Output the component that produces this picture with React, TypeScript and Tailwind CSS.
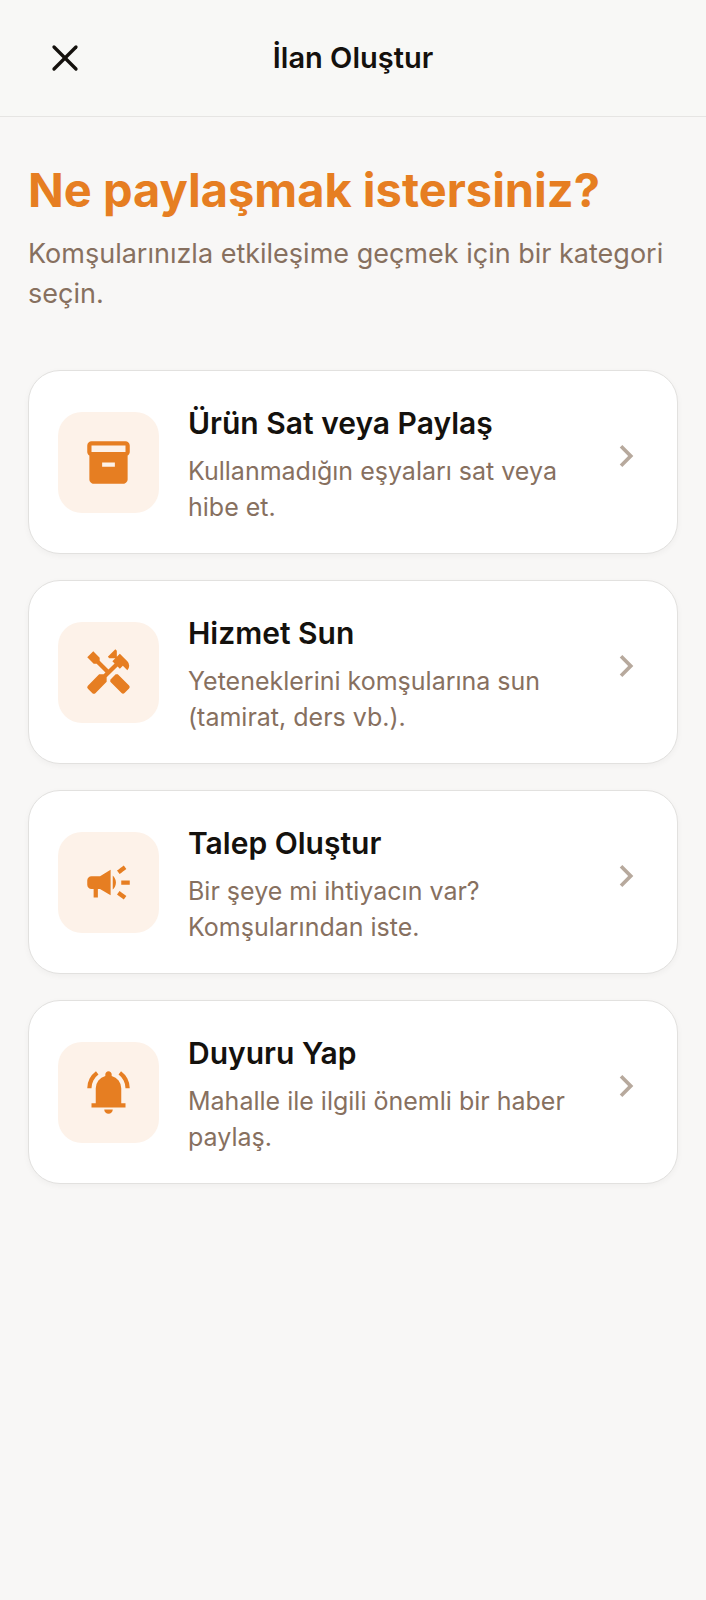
import type { ReactNode } from 'react';
import { X } from 'lucide-react';
import { MdCampaign, MdChevronRight, MdHandyman, MdInventory2 } from 'react-icons/md';

const BellIcon = () => (
  <svg viewBox="0 -960 960 960" fill="currentColor" className="size-[51px]" aria-hidden="true">
    <path d="M80-560q0-100 44.5-183.5T244-882l47 64q-60 44-95.5 111T160-560H80Zm720 0q0-80-35.5-147T669-818l47-64q75 55 119.5 138.5T880-560h-80ZM160-200v-80h80v-280q0-83 50-147.5T420-792v-28q0-25 17.5-42.5T480-880q25 0 42.5 17.5T540-820v28q80 20 130 84.5T720-560v280h80v80H160ZM480-80q-33 0-56.5-23.5T400-160h160q0 33-23.5 56.5T480-80Z" />
  </svg>
);

interface Category {
  title: string;
  description: string;
  icon: ReactNode;
}

const categories: Category[] = [
  {
    title: 'Ürün Sat veya Paylaş',
    description: 'Kullanmadığın eşyaları sat veya hibe et.',
    icon: <MdInventory2 className="size-[51px]" />,
  },
  {
    title: 'Hizmet Sun',
    description: 'Yeteneklerini komşularına sun (tamirat, ders vb.).',
    icon: <MdHandyman className="size-[51px]" />,
  },
  {
    title: 'Talep Oluştur',
    description: 'Bir şeye mi ihtiyacın var? Komşularından iste.',
    icon: <MdCampaign className="size-[51px]" />,
  },
  {
    title: 'Duyuru Yap',
    description: 'Mahalle ile ilgili önemli bir haber paylaş.',
    icon: <BellIcon />,
  },
];

const CategoryCard = ({ title, description, icon }: Category) => (
  <button
    type="button"
    className="flex w-full items-center rounded-[32px] border border-[#e2e1df] bg-white px-[29px] py-7 text-left shadow-[0_2px_6px_rgba(0,0,0,0.04)]"
  >
    <span className="flex size-[101px] shrink-0 items-center justify-center rounded-3xl bg-[#fdf2e9] text-[#e67e22]">
      {icon}
    </span>
    <span className="ml-[29px] min-w-0 flex-1 pt-1">
      <span className="block text-[30px] leading-10 font-semibold text-[#14110d]">{title}</span>
      <span className="mt-2.5 block text-[25px] leading-9 text-[#87705f]">{description}</span>
    </span>
    <MdChevronRight className="mb-3 ml-7 size-11 shrink-0 text-[#b7a99d]" />
  </button>
);

export default function App() {
  return (
    <div className="min-h-screen bg-[#f8f7f6] font-['Inter','Liberation_Sans',sans-serif]">
      <header className="grid grid-cols-[74px_1fr_74px] items-center border-b border-[#e6e5e3] bg-[#f8f8f6] px-7 py-[21px]">
        <button
          type="button"
          aria-label="Kapat"
          className="flex size-[74px] items-center justify-center text-[#14110d]"
        >
          <X size={44} strokeWidth={1.8} />
        </button>
        <h1 className="text-center text-[29px] leading-10 font-semibold text-[#14110d]">
          İlan Oluştur
        </h1>
      </header>

      <main className="px-7 pt-[41px] pb-7">
        <h2 className="text-[47px] leading-16 font-bold text-[#e67e22]">Ne paylaşmak istersiniz?</h2>
        <p className="mt-3 text-[27px] leading-10 text-[#87705f]">
          Komşularınızla etkileşime geçmek için bir kategori seçin.
        </p>

        <div className="mt-14 flex flex-col gap-[26px]">
          {categories.map((category) => (
            <CategoryCard key={category.title} {...category} />
          ))}
        </div>
      </main>
    </div>
  );
}
